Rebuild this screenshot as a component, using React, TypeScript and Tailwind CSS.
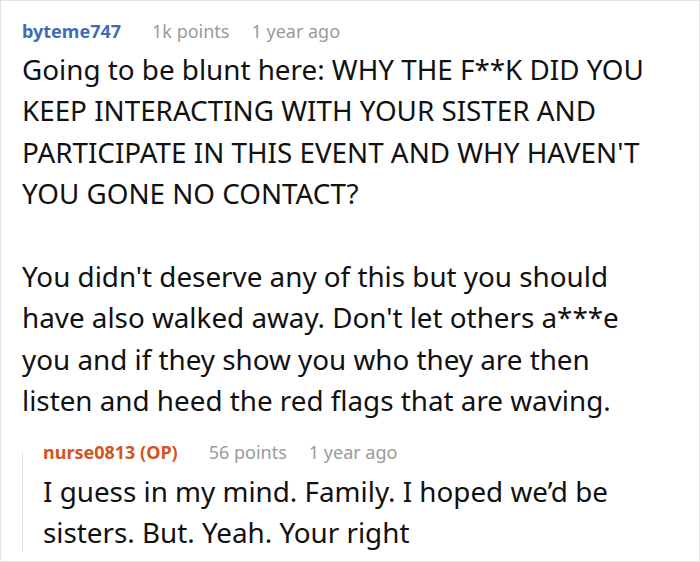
import React from 'react';

const bodyText = [
  "Going to be blunt here: WHY THE F**K DID YOU KEEP INTERACTING WITH YOUR SISTER AND PARTICIPATE IN THIS EVENT AND WHY HAVEN'T YOU GONE NO CONTACT?",
  "You didn't deserve any of this but you should have also walked away. Don't let others a***e you and if they show you who they are then listen and heed the red flags that are waving.",
];

const Meta: React.FC<{ name: string; points: string; nameClass: string }> = ({ name, points, nameClass }) => (
  <div className="flex items-center text-[18px] whitespace-nowrap">
    <span className={`font-bold ${nameClass}`}>{name}</span>
    <span className="ml-[31px] text-[#9a9a9a]">{points}</span>
    <span className="ml-[22px] text-[#9a9a9a]">1 year ago</span>
  </div>
);

export default function App() {
  return (
    <div className="w-[700px] h-[562px] bg-white border border-[#e3e3e3] overflow-hidden font-['Noto_Sans',sans-serif] text-[#111]">
      <div className="pl-[21px] pr-[40px] pt-[10px]">
        <div className="h-[40px] flex items-center">
          <Meta name="byteme747" points="1k points" nameClass="text-[#3d6db5]" />
        </div>
        <div className="text-[27.8px] leading-[41.4px] -mt-[2px]">
          <p>{bodyText[0]}</p>
          <p className="mt-[41.4px]">{bodyText[1]}</p>
        </div>
        <div className="flex mt-[12px]">
          <div className="w-px bg-[#dedede] mt-[18px] mb-[1px] shrink-0" />
          <div className="pl-[20px]">
            <div className="h-[37px] flex items-center">
              <Meta name="nurse0813 (OP)" points="56 points" nameClass="text-[#d4541f]" />
            </div>
            <p className="text-[27.8px] leading-[41px]">
              I guess in my mind. Family. I hoped we’d be sisters. But. Yeah. Your right
            </p>
          </div>
        </div>
      </div>
    </div>
  );
}
